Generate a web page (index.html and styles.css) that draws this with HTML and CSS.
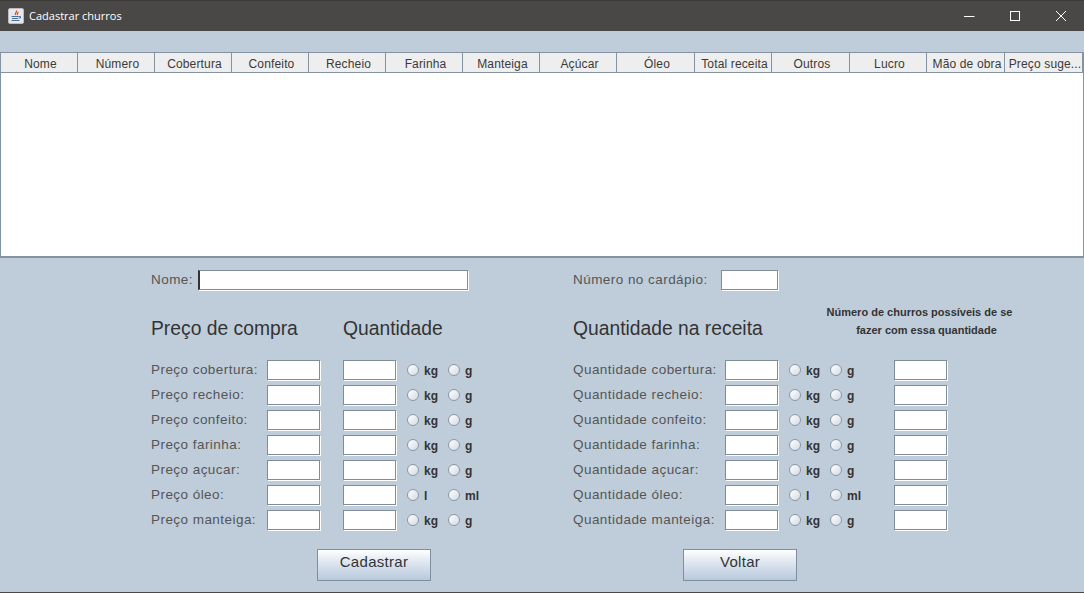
FILE: index.html
```html
<!DOCTYPE html>
<html lang="pt">
  <head>
    <meta charset="UTF-8" />
    <title>Cadastrar churros</title>
    <link rel="stylesheet" href="styles.css">
  </head>
  <body>
    <div class="window">
      <div class="titlebar">
        <svg class="app-icon" width="16" height="16" viewBox="0 0 16 16">
          <rect x="0.5" y="0.5" width="15" height="15" rx="1.5" fill="#e8e8ea" stroke="#b9bcc4" />
          <path d="M8.5 2.5c1 1.5-2 2.500-1 4.500M10 4c.5 1-1.500 1.500-.5 3" fill="none" stroke="#d8501f" stroke-width="1.300" />
          <path d="M3.500 8.500h7M4 10.500h6M3.500 12.500h8" fill="none" stroke="#4c6f9c" stroke-width="1.200" />
          <path d="M10.500 8.500h2v1.500h-2" fill="none" stroke="#4c6f9c" />
        </svg>
        <span class="title">Cadastrar churros</span>
        <div class="win-buttons">
          <svg width="12" height="12" viewBox="0 0 12 12"><path d="M1 6.500h10.500" stroke="#fff" fill="none" /></svg>
          <svg width="12" height="12" viewBox="0 0 12 12"><rect x="1.500" y="1.500" width="9" height="9" stroke="#fff" fill="none" /></svg>
          <svg width="12" height="12" viewBox="0 0 12 12"><path d="M1 1l10 10M11 1L1 11" stroke="#fff" fill="none" /></svg>
        </div>
      </div>

      <div class="table">
        <div class="table-head">
          <div>Nome</div>
          <div>Número</div>
          <div>Cobertura</div>
          <div>Confeito</div>
          <div>Recheio</div>
          <div>Farinha</div>
          <div>Manteiga</div>
          <div>Açúcar</div>
          <div>Óleo</div>
          <div>Total receita</div>
          <div>Outros</div>
          <div>Lucro</div>
          <div>Mão de obra</div>
          <div>Preço suge...</div>
        </div>
      </div>

      <div class="form">
        <div class="block block-left">
          <div class="top-row">
            <label class="name-label">Nome:</label>
            <input class="field field-name" type="text" />
          </div>
          <div class="heading-row">
            <h2 class="col-price">Preço de compra</h2>
            <h2>Quantidade</h2>
          </div>
          <div class="row">
            <label>Preço cobertura:</label>
            <input class="field" type="text" />
            <input class="field" type="text" />
            <div class="units"><span class="radio"></span><b>kg</b><span class="radio"></span><b>g</b></div>
          </div>
          <div class="row">
            <label>Preço recheio:</label>
            <input class="field" type="text" />
            <input class="field" type="text" />
            <div class="units"><span class="radio"></span><b>kg</b><span class="radio"></span><b>g</b></div>
          </div>
          <div class="row">
            <label>Preço confeito:</label>
            <input class="field" type="text" />
            <input class="field" type="text" />
            <div class="units"><span class="radio"></span><b>kg</b><span class="radio"></span><b>g</b></div>
          </div>
          <div class="row">
            <label>Preço farinha:</label>
            <input class="field" type="text" />
            <input class="field" type="text" />
            <div class="units"><span class="radio"></span><b>kg</b><span class="radio"></span><b>g</b></div>
          </div>
          <div class="row">
            <label>Preço açucar:</label>
            <input class="field" type="text" />
            <input class="field" type="text" />
            <div class="units"><span class="radio"></span><b>kg</b><span class="radio"></span><b>g</b></div>
          </div>
          <div class="row">
            <label>Preço óleo:</label>
            <input class="field" type="text" />
            <input class="field" type="text" />
            <div class="units"><span class="radio"></span><b>l</b><span class="radio"></span><b>ml</b></div>
          </div>
          <div class="row">
            <label>Preço manteiga:</label>
            <input class="field" type="text" />
            <input class="field" type="text" />
            <div class="units"><span class="radio"></span><b>kg</b><span class="radio"></span><b>g</b></div>
          </div>
          <button class="btn btn-save" type="button">Cadastrar</button>
        </div>

        <div class="block block-right">
          <div class="top-row">
            <label class="number-label">Número no cardápio:</label>
            <input class="field field-number" type="text" />
          </div>
          <div class="heading-row">
            <h2 class="col-recipe">Quantidade na receita</h2>
            <p class="note">Número de churros possíveis de se<br /><span class="note-second">fazer com essa quantidade</span></p>
          </div>
          <div class="row">
            <label>Quantidade cobertura:</label>
            <input class="field" type="text" />
            <div class="units"><span class="radio"></span><b>kg</b><span class="radio"></span><b>g</b></div>
            <input class="field" type="text" />
          </div>
          <div class="row">
            <label>Quantidade recheio:</label>
            <input class="field" type="text" />
            <div class="units"><span class="radio"></span><b>kg</b><span class="radio"></span><b>g</b></div>
            <input class="field" type="text" />
          </div>
          <div class="row">
            <label>Quantidade confeito:</label>
            <input class="field" type="text" />
            <div class="units"><span class="radio"></span><b>kg</b><span class="radio"></span><b>g</b></div>
            <input class="field" type="text" />
          </div>
          <div class="row">
            <label>Quantidade farinha:</label>
            <input class="field" type="text" />
            <div class="units"><span class="radio"></span><b>kg</b><span class="radio"></span><b>g</b></div>
            <input class="field" type="text" />
          </div>
          <div class="row">
            <label>Quantidade açucar:</label>
            <input class="field" type="text" />
            <div class="units"><span class="radio"></span><b>kg</b><span class="radio"></span><b>g</b></div>
            <input class="field" type="text" />
          </div>
          <div class="row">
            <label>Quantidade óleo:</label>
            <input class="field" type="text" />
            <div class="units"><span class="radio"></span><b>l</b><span class="radio"></span><b>ml</b></div>
            <input class="field" type="text" />
          </div>
          <div class="row">
            <label>Quantidade manteiga:</label>
            <input class="field" type="text" />
            <div class="units"><span class="radio"></span><b>kg</b><span class="radio"></span><b>g</b></div>
            <input class="field" type="text" />
          </div>
          <button class="btn btn-back" type="button">Voltar</button>
        </div>
      </div>
    </div>
  </body>
</html>
```

FILE: styles.css
```css
* {
  box-sizing: border-box;
}
html,
body {
  margin: 0;
  height: 100%;
}
body {
  font-family: "Liberation Sans", Arial, sans-serif;
  color: #333;
  overflow: hidden;
}
.window {
  width: 1084px;
  height: 593px;
  background-color: #bfcddb;
  border-bottom: 1px solid #4a4846;
}

/* title bar */
.titlebar {
  height: 31px;
  display: flex;
  align-items: center;
  padding-left: 8px;
  background-color: #4a4846;
  border-top: 1px solid #3c3a38;
}
.app-icon {
  flex: none;
  margin-bottom: 1px;
}
.title {
  margin-left: 5px;
  padding-bottom: 2px;
  font-family: "Open Sans", sans-serif;
  font-size: 11px;
  color: #fff;
}
.win-buttons {
  margin-left: auto;
  margin-right: 17px;
  display: flex;
  gap: 34px;
}

/* table */
.table {
  margin-top: 21px;
  height: 206px;
  background-color: #fff;
  border: 1px solid #8493a2;
  border-bottom-width: 2px;
}
.table-head {
  display: grid;
  grid-template-columns: repeat(8, 77px) 78px 77px 78px 77px 78px 1fr;
  height: 20px;
  border-bottom: 1px solid #8493a2;
}
.table-head div {
  padding-left: 3px;
  background-color: #eeeeee;
  border-right: 1px solid #8493a2;
  font-size: 12px;
  letter-spacing: 0.150px;
  line-height: 23px;
  text-align: center;
  white-space: nowrap;
  overflow: hidden;
  color: #3a3a3a;
}

/* form */
.form {
  display: flex;
  padding: 12px 0 0 151px;
}
.block {
  flex: none;
}
.block-left {
  width: 422px;
}
.top-row {
  height: 20px;
  display: flex;
  align-items: center;
}
.name-label {
  width: 47px;
}
.number-label {
  width: 148px;
}
.heading-row {
  height: 70px;
  display: flex;
}
h2 {
  margin: 28px 0 0;
  font-size: 19.300px;
  font-weight: normal;
  line-height: 22px;
  color: #333;
}
.col-price {
  width: 192px;
}
.col-recipe {
  width: 253px;
}
.note {
  margin: 13px 0 0;
  width: 187px;
  font-size: 11px;
  font-weight: bold;
  line-height: 18px;
  text-align: center;
  white-space: nowrap;
  color: #333;
}
.note-second {
  padding-left: 14px;
}
label {
  padding-bottom: 2px;
  font-size: 13.500px;
  letter-spacing: 0.450px;
  color: #555;
  white-space: nowrap;
}
.row {
  height: 25px;
  padding-bottom: 5px;
  display: grid;
  align-items: center;
}
.block-left .row {
  grid-template-columns: 116px 53px 23px 53px 1fr;
}
.block-left .row input:nth-of-type(2) {
  grid-column: 4;
}
.block-right .row {
  grid-template-columns: 152px 53px 116px 53px;
}
.field {
  width: 53px;
  height: 20px;
  padding: 0;
  background-color: #fff;
  border: 1px solid #7f8d9b;
  box-shadow: 1px 1px 0 #fff;
  outline: none;
}
.field-name {
  width: 270px;
  border-left: 2px solid #333;
}
.field-number {
  width: 57px;
}
.units {
  display: flex;
  align-items: center;
  padding-left: 11px;
}
.units b {
  width: 29px;
  margin-top: 2px;
  padding-left: 5px;
  font-size: 12px;
  color: #333;
}
.radio {
  flex: none;
  width: 12px;
  height: 12px;
  border-radius: 50%;
  border: 1px solid #8a97a4;
  background: linear-gradient(135deg, #fff, #d3dbe5);
}

/* buttons */
.btn {
  display: block;
  width: 114px;
  height: 32px;
  margin-top: 14px;
  padding: 0 0 7px;
  font-family: inherit;
  font-size: 15px;
  letter-spacing: 0.300px;
  color: #333;
  border: 1px solid #7f8fa0;
  background: linear-gradient(#fff, #dfe7f0 40%, #b8c9dd);
}
.btn-save {
  margin-left: 166px;
}
.btn-back {
  margin-left: 110px;
}
```
